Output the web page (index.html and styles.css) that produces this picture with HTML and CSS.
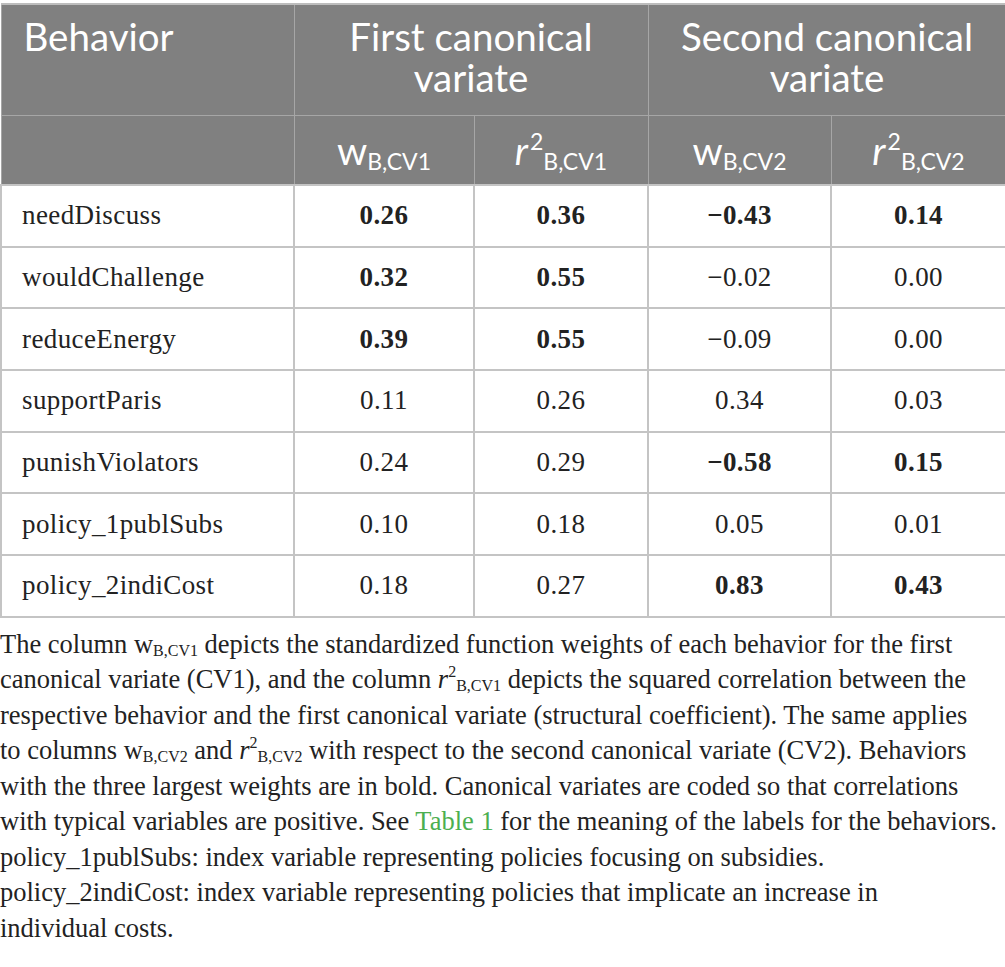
FILE: index.html
```html
<!DOCTYPE html>
<html lang="en">
<head>
    <meta charset="UTF-8">
    <title>Canonical variates</title>
    <link rel="stylesheet" href="styles.css">
</head>
<body>
    <div class="table-wrap">
        <table class="cv-table">
            <colgroup>
                <col class="c-label">
                <col class="c-w1">
                <col class="c-r1">
                <col class="c-w2">
                <col class="c-r2">
            </colgroup>
            <thead>
                <tr class="head-top">
                    <th class="th-left">Behavior</th>
                    <th colspan="2">First canonical variate</th>
                    <th colspan="2">Second canonical variate</th>
                </tr>
                <tr class="head-sub">
                    <th></th>
                    <th>w<sub>B,CV1</sub></th>
                    <th><i>r</i><sup>2</sup><sub>B,CV1</sub></th>
                    <th>w<sub>B,CV2</sub></th>
                    <th><i>r</i><sup>2</sup><sub>B,CV2</sub></th>
                </tr>
            </thead>
            <tbody>
                <tr>
                    <td class="label">needDiscuss</td>
                    <td><b>0.26</b></td>
                    <td><b>0.36</b></td>
                    <td><b>−0.43</b></td>
                    <td><b>0.14</b></td>
                </tr>
                <tr>
                    <td class="label">wouldChallenge</td>
                    <td><b>0.32</b></td>
                    <td><b>0.55</b></td>
                    <td>−0.02</td>
                    <td>0.00</td>
                </tr>
                <tr>
                    <td class="label">reduceEnergy</td>
                    <td><b>0.39</b></td>
                    <td><b>0.55</b></td>
                    <td>−0.09</td>
                    <td>0.00</td>
                </tr>
                <tr>
                    <td class="label">supportParis</td>
                    <td>0.11</td>
                    <td>0.26</td>
                    <td>0.34</td>
                    <td>0.03</td>
                </tr>
                <tr>
                    <td class="label">punishViolators</td>
                    <td>0.24</td>
                    <td>0.29</td>
                    <td><b>−0.58</b></td>
                    <td><b>0.15</b></td>
                </tr>
                <tr>
                    <td class="label">policy_1publSubs</td>
                    <td>0.10</td>
                    <td>0.18</td>
                    <td>0.05</td>
                    <td>0.01</td>
                </tr>
                <tr>
                    <td class="label">policy_2indiCost</td>
                    <td>0.18</td>
                    <td>0.27</td>
                    <td><b>0.83</b></td>
                    <td><b>0.43</b></td>
                </tr>
            </tbody>
        </table>
    </div>
    <div class="notes">
        <p>The column w<sub>B,CV1</sub> depicts the standardized function weights of each behavior for the first<br>
        canonical variate (CV1), and the column <i>r</i><sup>2</sup><sub>B,CV1</sub> depicts the squared correlation between the<br>
        respective behavior and the first canonical variate (structural coefficient). The same applies<br>
        to columns w<sub>B,CV2</sub> and <i>r</i><sup>2</sup><sub>B,CV2</sub> with respect to the second canonical variate (CV2). Behaviors<br>
        with the three largest weights are in bold. Canonical variates are coded so that correlations<br>
        with typical variables are positive. See <a href="#" class="ref">Table 1</a> for the meaning of the labels for the behaviors.</p>
        <p>policy_1publSubs: index variable representing policies focusing on subsidies.</p>
        <p>policy_2indiCost: index variable representing policies that implicate an increase in<br>
        individual costs.</p>
    </div>
</body>
</html>
```

FILE: styles.css
```css
body {
    margin: 0;
    background: #fff;
    color: #222;
    font-family: "Liberation Serif", "Times New Roman", serif;
}
.table-wrap {
    padding-top: 3px;
}
.cv-table {
    width: 1005px;
    border-collapse: collapse;
    table-layout: fixed;
}
.c-label { width: 293px; }
.c-w1 { width: 180px; }
.c-r1 { width: 174px; }
.c-w2 { width: 183px; }
.c-r2 { width: 175px; }
.cv-table th {
    background: #808080;
    color: #fff;
    font-family: Lato, "Open Sans", sans-serif;
    font-weight: normal;
    font-size: 38.5px;
    line-height: 41px;
    border: 1px solid #a6a6a6;
    text-align: center;
}
.cv-table thead tr:first-child th {
    border-top: 2px solid #bdbdbd;
}
.head-top th {
    height: 99px;
    vertical-align: top;
    padding: 11px 16px 0;
}
.head-top .th-left {
    text-align: left;
    padding-left: 22px;
}
.head-sub th {
    height: 55px;
    vertical-align: bottom;
    padding: 0 10px 13px;
}
.head-sub sub,
.head-sub sup {
    font-size: 23px;
    line-height: 0;
}
.head-sub sub {
    vertical-align: -5px;
}
.head-sub sup {
    vertical-align: 15px;
}
.head-sub i {
    padding-right: 2px;
}
.cv-table td {
    height: 59.7px;
    border: 2px solid #c4c4c4;
    font-size: 27px;
    letter-spacing: 0.4px;
    text-align: center;
    padding: 0;
}
.cv-table td.label {
    text-align: left;
    padding-left: 20px;
}
.notes {
    padding-top: 9px;
    font-size: 26.5px;
    line-height: 35.5px;
}
.notes p {
    margin: 0;
    white-space: nowrap;
}
.notes sub,
.notes sup {
    font-size: 16px;
    line-height: 0;
}
.notes sub {
    vertical-align: -3px;
}
.notes sup {
    vertical-align: 11px;
}
.ref {
    color: #4caf50;
    text-decoration: none;
}
```
